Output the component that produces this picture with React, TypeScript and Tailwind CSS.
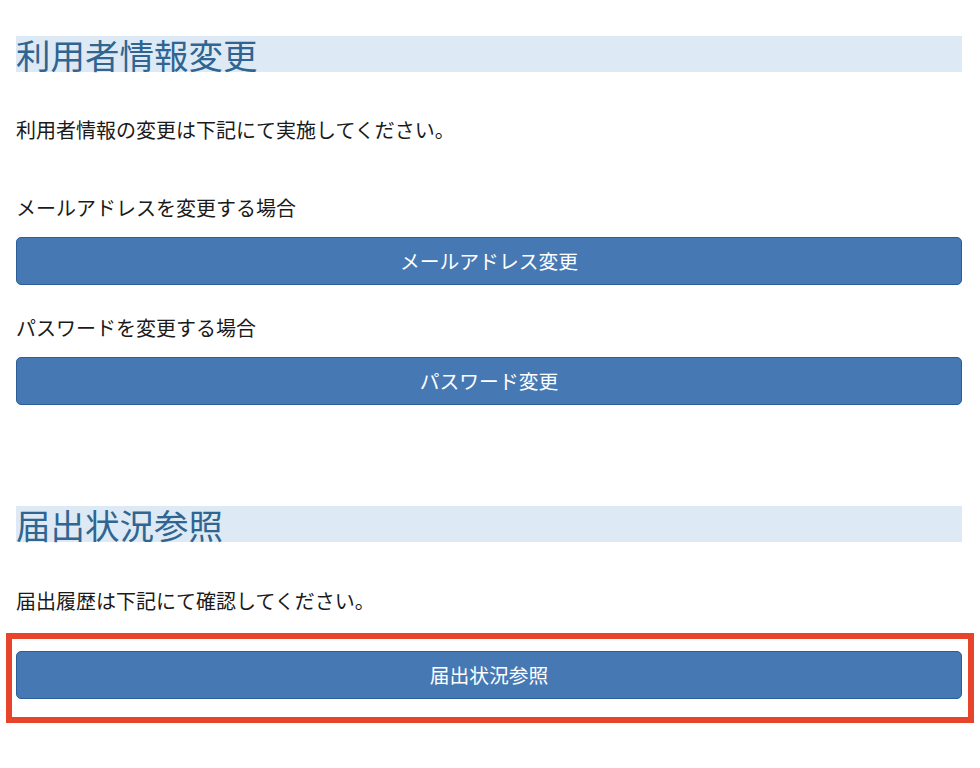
import React from 'react'

const font = { fontFamily: '"Noto Sans CJK JP", "Noto Sans", sans-serif' }

function SectionTitle({ children }: { children: React.ReactNode }) {
  return (
    <h2 className="h-[36px] bg-[#ddeaf6] text-[34.5px] leading-[37px] text-[#2f6590] font-normal">
      {children}
    </h2>
  )
}

function ActionButton({ children }: { children: React.ReactNode }) {
  return (
    <button
      type="button"
      className="block w-full h-[48px] rounded-[5px] border border-[#2c5d98] bg-[#4679b3] text-[19.8px] text-white"
    >
      {children}
    </button>
  )
}

export default function App() {
  return (
    <div className="min-h-[768px] bg-white text-[#1a1a1a]" style={font}>
      <div className="pl-4 pr-[18px] pt-[36px]">
        {/* 利用者情報変更 */}
        <SectionTitle>利用者情報変更</SectionTitle>
        <p className="mt-[43px] text-[20px] leading-[30px]">
          利用者情報の変更は下記にて実施してください。
        </p>

        <p className="mt-[48px] text-[20px] leading-[30px]">メールアドレスを変更する場合</p>
        <div className="mt-[14px]">
          <ActionButton>メールアドレス変更</ActionButton>
        </div>

        <p className="mt-[28px] text-[20px] leading-[30px]">パスワードを変更する場合</p>
        <div className="mt-[14px]">
          <ActionButton>パスワード変更</ActionButton>
        </div>

        {/* 届出状況参照 */}
        <div className="mt-[101px]">
          <SectionTitle>届出状況参照</SectionTitle>
        </div>
        <p className="mt-[44px] text-[20px] leading-[30px]">
          届出履歴は下記にて確認してください。
        </p>

        <div className="mt-[17px] ml-[-10px] mr-[-12px] border-[6px] border-[#e8432b] pl-[4px] pr-[6px] pt-[12px] pb-[18px]">
          <ActionButton>届出状況参照</ActionButton>
        </div>
      </div>
    </div>
  )
}
